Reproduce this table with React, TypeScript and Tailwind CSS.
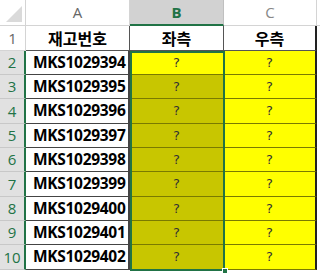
import React from "react";

const ids = ["MKS1029394", "MKS1029395", "MKS1029396", "MKS1029397", "MKS1029398", "MKS1029399", "MKS1029400", "MKS1029401", "MKS1029402"];
const heights = ["h-[24px]", "h-[24px]", "h-[25px]", "h-[24px]", "h-[24px]", "h-[25px]", "h-[24px]", "h-[24px]", "h-[25px]"];

const kr = { fontFamily: '"Noto Sans CJK KR", "Noto Sans", sans-serif' };
const num = { fontFamily: '"Open Sans", "Noto Sans", sans-serif' };
const q = { fontFamily: '"DejaVu Sans", sans-serif' };

export default function App() {
  return (
    <div className="relative w-[320px] h-[273px] bg-white overflow-hidden">
      {/* column headers */}
      <div className="flex h-[26px]">
        <div className="w-[26px] shrink-0 border-r border-b border-[#d4d4d4] flex items-end justify-end p-[3px]">
          <div className="w-0 h-0 border-l-[16px] border-l-transparent border-b-[16px] border-b-[#dadada]" />
        </div>
        <div className="w-[104px] shrink-0 border-r border-b border-[#d4d4d4] flex items-center justify-center text-[15px] text-[#666]" style={num}>
          A
        </div>
        <div className="w-[94px] shrink-0 bg-[#d2d2d2] border-r border-[#c0c0c0] border-b-2 border-b-[#217346] flex items-center justify-center text-[15px] font-bold text-[#217346]" style={num}>
          B
        </div>
        <div className="w-[93px] shrink-0 border-r border-b border-[#d4d4d4] flex items-center justify-center text-[15px] text-[#888]" style={num}>
          C
        </div>
        <div className="flex-1 border-b border-[#d4d4d4]" />
      </div>

      {/* row 1 */}
      <div className="flex h-[25px]">
        <div className="w-[26px] shrink-0 border-r border-b border-[#d4d4d4] flex items-center justify-center text-[15px] text-[#666]" style={num}>
          1
        </div>
        <div className="w-[104px] shrink-0 border-r border-b border-[#555] flex items-center justify-center text-[16px] font-bold text-black" style={kr}>
          재고번호
        </div>
        <div className="w-[94px] shrink-0 border-r border-b border-[#555] flex items-center justify-center text-[16px] font-bold text-black" style={kr}>
          좌측
        </div>
        <div className="w-[93px] shrink-0 border-r-2 border-r-[#222] border-b border-[#555] flex items-center justify-center text-[16px] font-bold text-black" style={kr}>
          우측
        </div>
        <div className="flex-1" />
      </div>

      {/* data rows */}
      {ids.map((id, i) => (
        <div key={id} className={`flex ${heights[i]}`}>
          <div className="w-[26px] shrink-0 bg-[#e1e1e1] border-r-2 border-r-[#217346] border-b border-[#c8c8c8] flex items-center justify-center text-[15px] text-[#217346]" style={num}>
            {i + 2}
          </div>
          <div className="w-[104px] shrink-0 border-r-2 border-r-[#444] border-b border-[#444] flex items-center pl-[7px] text-[15.5px] font-bold text-black tracking-[-0.3px]" style={num}>
            {id}
          </div>
          <div className={`w-[94px] shrink-0 border-r border-b border-[#7a7a00] flex items-center justify-center text-[13px] text-[#333] ${i === 0 ? "bg-[#ffff00]" : "bg-[#c8c600]"}`} style={q}>
            ?
          </div>
          <div className="w-[93px] shrink-0 bg-[#ffff00] border-r-2 border-r-[#222] border-b border-[#7a7a00] flex items-center justify-center text-[13px] text-[#333]" style={q}>
            ?
          </div>
          <div className="flex-1" />
        </div>
      ))}

      {/* selection B2:B10 */}
      <div className="absolute left-[130px] top-[51px] w-[95px] h-[220px] border-2 border-[#217346] pointer-events-none" />
      <div className="absolute left-[222px] top-[268px] w-[6px] h-[6px] bg-[#217346] border border-white" />
    </div>
  );
}
